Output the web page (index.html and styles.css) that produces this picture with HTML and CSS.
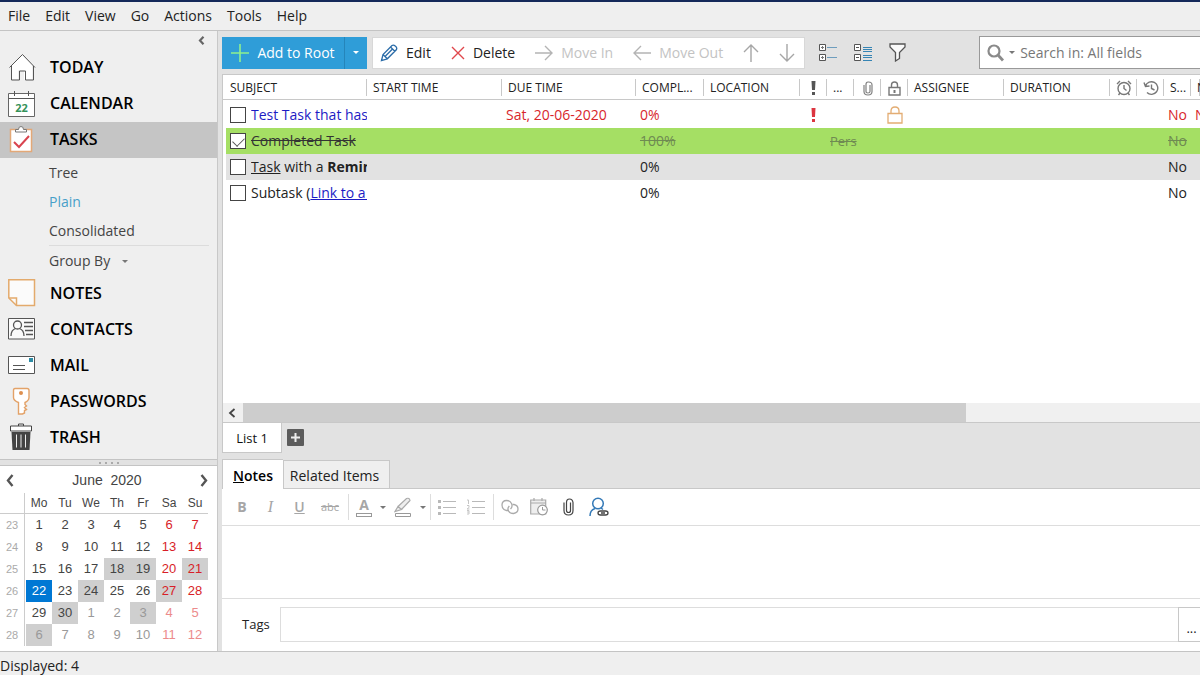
FILE: index.html
```html
<!DOCTYPE html>
<html lang="en">
<head>
<meta charset="utf-8">
<title>Tasks</title>
<link rel="stylesheet" href="styles.css">
</head>
<body>
<div class="app">
  <nav class="menubar" aria-label="Main menu">
    <button>File</button><button>Edit</button><button>View</button><button>Go</button><button>Actions</button><button>Tools</button><button>Help</button>
  </nav>
  <div class="workspace">
    <aside class="sidebar">
      <div class="sections">
        <button class="collapse" aria-label="Collapse panel"><svg width="7" height="9" viewBox="0 0 7 9"><path d="M5.500 .8 2 4.500l3.500 3.700" fill="none" stroke="#666" stroke-width="2.200"/></svg></button>
        <a class="section" href="#today"><svg width="28" height="28" viewBox="0 0 28 28"><path d="M4 12v14.500h6v-9h6v9h8V12L14 2z" fill="#fff"/><path d="M1.500 14.500 14.500 1.500l12.500 13M3.500 13v14h8v-9h6v9h8V13" fill="none" stroke="#555"/></svg><span>TODAY</span></a>
        <a class="section" href="#calendar"><svg width="28" height="28" viewBox="0 0 28 28"><path d="M.5 4.500h26v23H.5z" fill="#fff" stroke="#666"/><path d="M.5 9.500h26M6.500 2v5M20.500 2v5" stroke="#555"/><text x="13.500" y="23" class="day">22</text></svg><span>CALENDAR</span></a>
        <a class="section current" href="#tasks"><svg width="28" height="28" viewBox="0 0 28 28"><path d="M2.500 4.500h21v22h-21z" fill="#fff" stroke="#e3a877" stroke-width="1.500"/><path d="M7.500 7V4.500h3Q10.500 1.500 13 1.500t2.500 3h3V7z" fill="#fff" stroke="#777"/><path d="m6 17 5 5 10-11" fill="none" stroke="#d9444f" stroke-width="2"/></svg><span>TASKS</span></a>
        <div class="views">
          <a href="#tree">Tree</a><a class="active" href="#plain">Plain</a><a href="#consolidated">Consolidated</a>
          <button class="group">Group By <i class="caret"></i></button>
        </div>
        <a class="section" href="#notes"><svg width="28" height="28" viewBox="0 0 28 28"><path d="M.8.8h25.700v25.700H8.500L.8 19z" fill="#fbfbfb" stroke="#e3aa6c" stroke-width="1.500"/><path d="M1 19h7.500v7.500" fill="none" stroke="#e3aa6c" stroke-width="1.500"/></svg><span>NOTES</span></a>
        <a class="section" href="#contacts"><svg width="28" height="28" viewBox="0 0 28 28"><path d="M.5 3.500h26v20.500H.5z" fill="#fafafa" stroke="#555"/><g fill="none" stroke="#555" stroke-width="1.300"><circle cx="9.500" cy="10" r="4"/><path d="M3 21q0-6 4.500-7.500M16 21q0-6-4.500-7.500M16 7.500h9M16 11.500h9M17 15.500h8M18 19.500h7"/></g></svg><span>CONTACTS</span></a>
        <a class="section" href="#mail"><svg width="28" height="28" viewBox="0 0 28 28"><path d="M.5 5.500h26v17H.5z" fill="#fff" stroke="#555"/><path d="M21 7h4v4h-4z" fill="#2d8ca5"/><path d="M5 14.500h12M5 18.500h12" stroke="#555"/></svg><span>MAIL</span></a>
        <a class="section" href="#passwords"><svg width="28" height="28" viewBox="0 0 28 28"><path d="M7 1.500h12q2 0 2 2v7q0 3-4 5v2l1.500 1.500-2 1.500 2 2-2 1v2.500l-2 1h-4V15.500q-5-2-5-5v-7q0-2 1.500-2z" fill="#fff" stroke="#e3a268" stroke-width="1.400"/><circle cx="13" cy="6" r="2" fill="#dd8f50"/></svg><span>PASSWORDS</span></a>
        <a class="section" href="#trash"><svg width="28" height="28" viewBox="0 0 28 28"><path d="M2.500 3h21v5h-21z" fill="#fff" stroke="#444"/><path d="M10.500 3V1h5v2" fill="none" stroke="#444"/><path d="M3.500 9h19l-1 18h-17z" fill="#444"/><path d="M8.500 11.500v13M13 11.500v13M17.500 11.500v13" stroke="#eee"/></svg><span>TRASH</span></a>
      </div>
      <div class="splitter"><i></i><i></i><i></i><i></i></div>
      <div class="calendar">
        <div class="month">
          <button aria-label="Previous month"><svg width="8" height="13" viewBox="0 0 8 13"><path d="M6.500 1 2 6.500 6.500 12" fill="none" stroke="#555" stroke-width="2.400"/></svg></button>
          <span>June&nbsp; 2020</span>
          <button aria-label="Next month"><svg width="8" height="13" viewBox="0 0 8 13"><path d="M1.500 1 6 6.500 1.500 12" fill="none" stroke="#555" stroke-width="2.400"/></svg></button>
        </div>
        <table class="days">
          <thead><tr><th></th><th>Mo</th><th>Tu</th><th>We</th><th>Th</th><th>Fr</th><th>Sa</th><th>Su</th></tr></thead>
          <tbody>
            <tr><th>23</th><td>1</td><td>2</td><td>3</td><td>4</td><td>5</td><td>6</td><td>7</td></tr>
            <tr><th>24</th><td>8</td><td>9</td><td>10</td><td>11</td><td>12</td><td>13</td><td>14</td></tr>
            <tr><th>25</th><td>15</td><td>16</td><td>17</td><td class="busy">18</td><td class="busy">19</td><td>20</td><td class="busy">21</td></tr>
            <tr><th>26</th><td class="today">22</td><td>23</td><td class="busy">24</td><td>25</td><td>26</td><td class="busy">27</td><td>28</td></tr>
            <tr><th>27</th><td>29</td><td class="busy">30</td><td class="other">1</td><td class="other">2</td><td class="other busy">3</td><td class="other">4</td><td class="other">5</td></tr>
            <tr><th>28</th><td class="other busy">6</td><td class="other">7</td><td class="other">8</td><td class="other">9</td><td class="other">10</td><td class="other">11</td><td class="other">12</td></tr>
          </tbody>
        </table>
      </div>
    </aside>

    <main class="content">
      <div class="toolbar">
        <div class="add">
          <button class="add-main"><svg width="18" height="18" viewBox="0 0 18 18"><path d="M9 0v18M0 9h18" stroke="#8ff08f" stroke-width="1.600"/></svg>Add to Root</button>
          <button class="add-more" aria-label="More add options"><i class="caret"></i></button>
        </div>
        <div class="actions">
          <button><svg width="18" height="18" viewBox="0 0 18 18"><path d="m1.500 16.500 1.500-6L12 1.500q1.500-1 3.500.7t.8 3.600l-9 9zM3 10.500l4.300 4.300M10.500 3l4.300 4.300M5.500 12l7-7" fill="none" stroke="#2b6ca8" stroke-width="1.300"/></svg>Edit</button>
          <button><svg width="14" height="14" viewBox="0 0 14 14"><path d="m1 1 12 12M13 1 1 13" stroke="#e0474c" stroke-width="1.400"/></svg>Delete</button>
          <button disabled><svg width="18" height="18" viewBox="0 0 18 18"><path d="M0 9h17M10 2l7 7-7 7" fill="none" stroke="#b4b4b4" stroke-width="1.400"/></svg>Move In</button>
          <button disabled><svg width="18" height="18" viewBox="0 0 18 18"><path d="M18 9H1M8 2 1 9l7 7" fill="none" stroke="#b4b4b4" stroke-width="1.400"/></svg>Move Out</button>
          <button disabled aria-label="Move up"><svg width="16" height="18" viewBox="0 0 16 18"><path d="M8 18V1M1 8l7-7 7 7" fill="none" stroke="#a6a6a6" stroke-width="1.400"/></svg></button>
          <button disabled aria-label="Move down"><svg width="16" height="18" viewBox="0 0 16 18"><path d="M8 0v17M1 10l7 7 7-7" fill="none" stroke="#a6a6a6" stroke-width="1.400"/></svg></button>
        </div>
        <div class="tools">
          <button aria-label="Expand all"><svg width="19" height="18" viewBox="0 0 19 18"><path d="M.5.5h6v6h-6zM.5 10.500h6v6h-6z" fill="#fff" stroke="#555"/><path d="M2 3.500h3M3.500 2v3M2 13.500h3M3.500 12v3" stroke="#777"/><path d="M8 3.500h10M8 13.500h10" stroke="#6e9dbd"/></svg></button>
          <button aria-label="Collapse all"><svg width="19" height="18" viewBox="0 0 19 18"><path d="M.5.5h6v6h-6zM.5 10.500h6v6h-6z" fill="#fff" stroke="#555"/><path d="M2 3.500h3M2 13.500h3" stroke="#555"/><path d="M9 3.500h9M9 5.500h9M9 7.500h9M9 11.500h9M9 13.500h9M9 16.500h9" stroke="#3584b4"/></svg></button>
          <button aria-label="Filter"><svg width="17" height="19" viewBox="0 0 17 19"><path d="M1 1h15v3l-5.500 5.500v6L6.500 18V9.500L1 4z" fill="#fafafa" stroke="#555" stroke-width="1.300"/></svg></button>
        </div>
        <label class="search">
          <svg width="17" height="18" viewBox="0 0 17 18"><circle cx="7" cy="7" r="5.500" fill="none" stroke="#8a8a8a" stroke-width="2.200"/><path d="m11 11 5 5.500" stroke="#8a8a8a" stroke-width="2.800"/></svg>
          <i class="caret"></i>
          <input type="search" aria-label="Search" placeholder="Search in: All fields">
        </label>
      </div>

      <div class="grid">
        <table class="tasks">
          <colgroup><col class="c-subject"><col class="c-date"><col class="c-due"><col class="c-complete"><col class="c-text"><col class="c-icon"><col class="c-icon"><col class="c-icon"><col class="c-icon"><col class="c-text"><col class="c-duration"><col class="c-icon"><col class="c-icon"><col class="c-icon"><col></colgroup>
          <thead><tr>
            <th>SUBJECT</th><th>START TIME</th><th>DUE TIME</th><th>COMPL...</th><th>LOCATION</th>
            <th class="mark"><svg width="5" height="14" viewBox="0 0 5 14"><path d="M.5 0h4L4 9H1zM1 11h3v3H1z" fill="#555"/></svg></th>
            <th>...</th>
            <th class="mark"><svg width="10" height="15" viewBox="0 0 10 15"><path d="M7 4v6.500q0 1.500-2 1.500t-2-1.500V3.500Q3 1 5 1h.5Q9 1 9 4v6.500Q9 14 5 14t-4-3.500V4" fill="none" stroke="#808080" stroke-width="1.200"/></svg></th>
            <th class="mark"><svg width="13" height="15" viewBox="0 0 13 15"><path d="M1 6.500h11V14H1zM3.500 6.500V4q0-3 3-3t3 3v2.500" fill="none" stroke="#777" stroke-width="1.400"/><path d="M5.500 9h2v3h-2z" fill="#777"/></svg></th>
            <th>ASSIGNEE</th><th>DURATION</th>
            <th class="mark"><svg width="16" height="16" viewBox="0 0 16 16"><g fill="none" stroke="#777" stroke-width="1.400"><circle cx="8" cy="8.500" r="6"/><path d="M8 5v3.500l2.500 2M1 4l3-3M15 4l-3-3M4 13l-1.500 2M12 13l1.500 2"/></g></svg></th>
            <th class="mark"><svg width="16" height="16" viewBox="0 0 16 16"><g fill="none" stroke="#777" stroke-width="1.400"><path d="M2.500 6A6.300 6.300 0 1 1 4 12.500M1 2.500 2.500 6.500l4-.5M8.500 4.500v4l3 1.500"/></g></svg></th>
            <th>S...</th><th>N</th>
          </tr></thead>
          <tbody>
            <tr class="overdue"><td><label><input type="checkbox"><span class="blue">Test Task that has</span></label></td><td></td><td>Sat, 20-06-2020</td><td>0%</td><td></td>
              <td class="mark"><svg width="5" height="14" viewBox="0 0 5 14"><path d="M.5 0h4L4 9H1zM1 11h3v3H1z" fill="#dc3540"/></svg></td><td></td><td></td>
              <td class="mark"><svg width="16" height="18" viewBox="0 0 16 18"><path d="M1 7.500h14v9.500H1zM4 7.500V5q0-4 4-4t4 4v2.500" fill="none" stroke="#e3ad73" stroke-width="1.300"/></svg></td>
              <td></td><td></td><td></td><td></td><td>No</td><td>N</td></tr>
            <tr class="done"><td><label><input type="checkbox" checked><span>Completed Task</span></label></td><td></td><td></td><td>100%</td><td></td><td></td><td class="category">Pers</td><td></td><td></td><td></td><td></td><td></td><td></td><td>No</td><td></td></tr>
            <tr class="alt"><td><label><input type="checkbox"><span><u>Task</u> with a <b>Remin</b></span></label></td><td></td><td></td><td>0%</td><td></td><td></td><td></td><td></td><td></td><td></td><td></td><td></td><td></td><td>No</td><td></td></tr>
            <tr><td><div class="cell"><input type="checkbox" aria-label="Subtask"><span>Subtask (<a href="#link">Link to a&nbsp;</a></span></div></td><td></td><td></td><td>0%</td><td></td><td></td><td></td><td></td><td></td><td></td><td></td><td></td><td></td><td>No</td><td></td></tr>
          </tbody>
        </table>
        <div class="scrollbar">
          <button aria-label="Scroll left"><svg width="8" height="10" viewBox="0 0 8 10"><path d="M6.500 1 2 5l4.500 4" fill="none" stroke="#444" stroke-width="1.800"/></svg></button>
          <div class="track"><div class="thumb"></div></div>
        </div>
      </div>

      <div class="lists">
        <button class="list-tab">List 1</button>
        <button class="list-add" aria-label="Add list"><svg width="17" height="17" viewBox="0 0 17 17"><rect width="17" height="17" rx="1" fill="#5c5c5c"/><path d="M8.500 4v9M4 8.500h9" stroke="#eee" stroke-width="2"/></svg></button>
      </div>

      <section class="details">
        <div class="tabs"><button class="selected"><u>N</u>otes</button><button>Related Items</button></div>
        <div class="format">
          <div class="set styles">
            <button class="bold">B</button><button class="italic">I</button><button class="under">U</button><button class="strike">abc</button>
          </div>
          <div class="set colors">
            <button class="fore" aria-label="Text color"><b>A</b><i class="swatch"></i></button>
            <button aria-label="Text color options"><i class="caret"></i></button>
            <button aria-label="Highlight color"><svg width="18" height="20" viewBox="0 0 18 20"><path d="m4 9.500 8.500-8q3-1 3.500 2l-8.500 9zM4 9.500l-3 5 6.500-2z" fill="#eee" stroke="#aaa" stroke-width="1.200"/><path d="M1.500 16.500h15v3h-15z" fill="#fff" stroke="#999"/></svg></button>
            <button aria-label="Highlight options"><i class="caret"></i></button>
          </div>
          <div class="set lines">
            <button aria-label="Bullet list"><svg width="18" height="16" viewBox="0 0 18 16"><path d="M0 1h3v3H0zM0 7h3v3H0zM0 13h3v3H0z" fill="#b9b9b9"/><path d="M5 2.500h13M5 8.500h13M5 14.500h13" stroke="#b9b9b9"/></svg></button>
            <button aria-label="Numbered list"><svg width="18" height="16" viewBox="0 0 18 16"><path d="M0 1h1.500v4M0 6.500h2v2L0 10h2.500M0 11.500h2V15H0M0 13h2" fill="none" stroke="#c6c6c6"/><path d="M5 2.500h13M5 8.500h13M5 14.500h13" stroke="#b9b9b9"/></svg></button>
          </div>
          <div class="set inserts">
            <button aria-label="Insert link"><svg width="18" height="16" viewBox="0 0 18 16"><g fill="none" stroke="#aaa" stroke-width="1.300"><path d="M8 11.500H5.500Q1 10.500 1 6t4.500-4.500q3.500 0 5 3t-1 5.500"/><path d="M11.500 5.500h1.500q4 .8 4 4.500t-4.500 4.500q-3.500 0-5-2.500t.8-5"/></g></svg></button>
            <button aria-label="Insert date"><svg width="18" height="18" viewBox="0 0 18 18"><path d="M.7 2h15v14h-15zM.7 5h15M4 0v3M12 0v3" fill="#eee" stroke="#aaa" stroke-width="1.200"/><circle cx="12.500" cy="12" r="4.800" fill="#fff" stroke="#999" stroke-width="1.200"/><path d="M12.500 9v3h3" fill="none" stroke="#999"/></svg></button>
            <button aria-label="Attach file"><svg width="11" height="18" viewBox="0 0 11 18"><path d="M7.500 4.500v8q0 2-2 2t-2-2v-8Q3.500 1 6.500 1T10 4.500v8Q10 17 5.500 17T1 12.500v-8" fill="none" stroke="#444" stroke-width="1.200"/></svg></button>
            <button aria-label="Link contact"><svg width="20" height="20" viewBox="0 0 20 20"><circle cx="9" cy="6.500" r="5.300" fill="none" stroke="#3379b7" stroke-width="1.500"/><path d="M1 19q0-6 5-7.500M12 11l2 1.500" fill="none" stroke="#3379b7" stroke-width="1.500"/><path d="M11.500 14h5q2.500 0 2.500 2t-2.500 2h-5Q9 18 9 16t2.500-2zM12 16h4" fill="none" stroke="#444" stroke-width="1.300"/></svg></button>
          </div>
        </div>
        <textarea class="editor" aria-label="Notes"></textarea>
        <div class="tags"><label for="tags">Tags</label><input id="tags" type="text"><button aria-label="Choose tags">...</button></div>
      </section>
    </main>
  </div>
  <footer class="status">Displayed: 4</footer>
</div>
</body>
</html>
```

FILE: styles.css
```css
* { box-sizing: border-box; }
body { margin: 0; font: 14px/20px "Open Sans", "Noto Sans", sans-serif; color: #222; background: #e2e2e2; }
button { font: inherit; color: inherit; background: none; border: 0; padding: 0; display: flex; align-items: center; justify-content: center; }
input, textarea { font: inherit; }
a { color: inherit; text-decoration: none; }
svg { display: block; flex: none; }
.caret { display: block; border: 3px solid transparent; border-top-color: #777; border-bottom: 0; }

.app { height: 100vh; display: flex; flex-direction: column; overflow: hidden; }
.menubar { flex: none; height: 31px; display: flex; gap: 15px; padding-left: 8px; background: #efefef; border-top: 2px solid #14295a; border-bottom: 1px solid #c4c4c4; }
.workspace { flex: 1; min-height: 0; display: flex; gap: 4px; }
.status { flex: none; height: 24px; padding-top: 4px; background: #efefef; border-top: 1px solid #c4c4c4; }

/* Sidebar */
.sidebar { flex: none; width: 218px; display: flex; flex-direction: column; border-right: 1px solid #c8c8c8; }
.sections { flex: 1; background: #efefef; border-bottom: 1px solid #c4c4c4; }
.collapse { width: 12px; height: 19px; margin-left: 195px; }
.section { display: flex; align-items: center; gap: 14px; height: 36px; padding: 0 0 2px 8px; font-size: 16px; font-weight: 600; color: #000; }
.section.current { background: #c5c5c5; }
.day { font: bold 11px "Open Sans", sans-serif; fill: #35925a; text-anchor: middle; }
.views { display: flex; flex-direction: column; margin: 0 8px 0 49px; color: #444; }
.views a { line-height: 29px; }
.views .active { color: #489fc9; }
.group { height: 31px; justify-content: flex-start; gap: 12px; border-top: 1px solid #dcdcdc; }
.splitter { height: 5px; display: flex; align-items: center; justify-content: center; gap: 4px; }
.splitter i { width: 2px; height: 2px; background: #aaa; }
.calendar { height: 186px; padding: 1px 9px 0 0; background: #fff; border-top: 1px solid #c4c4c4; font: 13px/22px "Liberation Sans", Arial, sans-serif; color: #444; }
.month { height: 26px; padding: 0 0 0 6px; display: flex; align-items: center; justify-content: space-between; font-size: 14px; }
.days { width: 100%; table-layout: fixed; border-collapse: separate; border-spacing: 0; text-align: center; }
.days th, .days td { padding: 0; font-weight: 400; }
.days th:first-child { width: 26px; padding-right: 2px; font-size: 11px; color: #aaa; background: linear-gradient(#ccc, #ccc) 24px 0 / 1px 100% no-repeat; }
.days thead th { height: 21px; line-height: 20px; font-size: 12px; border-bottom: 1px solid #ccc; }
.days td { height: 22px; }
.days td:nth-child(n+7) { color: #d81e28; }
.days .other { color: #999; }
.days .other:nth-child(n+7) { color: #ec8b8b; }
.days .busy { background: #cfcfcf; }
.days .today { background: #0078d4; color: #fff; }

/* Task toolbar */
.content { flex: 1; min-width: 0; display: flex; flex-direction: column; }
.toolbar { flex: none; height: 43px; display: flex; align-items: center; }
.add { display: flex; height: 32px; background: #2f9dd8; color: #fff; }
.add-main { width: 123px; gap: 8px; border-right: 1px solid #2585ba; }
.add-more { width: 22px; }
.add .caret { border-top-color: #fff; }
.actions { display: flex; gap: 20px; height: 32px; margin-left: 5px; padding: 0 9px 0 7px; background: #fff; border: 1px solid #d8d8d8; }
.actions button { gap: 8px; }
.actions button:disabled { color: #c3c3c3; }
.tools { display: flex; gap: 16px; margin-left: 14px; }
.search { flex: 1; height: 33px; display: flex; align-items: center; gap: 5px; margin-left: 73px; padding-left: 7px; background: #fff; border: 1px solid #999; border-right: 0; }
.search input { flex: 1; min-width: 0; border: 0; padding: 0; outline: 0; background: none; }
.search input::placeholder { color: #777; }

/* Task list */
.grid { flex: 1; min-height: 0; display: flex; flex-direction: column; justify-content: space-between; background: #fff; border: 1px solid #c8c8c8; border-width: 1px 0 1px 1px; overflow: hidden; }
.tasks { width: 100%; table-layout: fixed; border-collapse: separate; border-spacing: 0; text-align: left; }
.c-subject { width: 144px; }
.c-date { width: 135px; }
.c-due { width: 134px; }
.c-complete { width: 68px; }
.c-text { width: 96px; }
.c-icon { width: 27px; }
.c-duration { width: 106px; }
.tasks th { height: 25px; padding: 2px 0 0 6px; font-size: 12px; font-weight: 400; border-bottom: 1px solid #c8c8c8; white-space: nowrap; overflow: hidden; background: linear-gradient(#c8c8c8, #c8c8c8) 100% 4px / 1px 17px no-repeat; }
.tasks th:first-child { padding-left: 7px; }
.tasks td { height: 26px; padding: 0 0 0 4px; white-space: nowrap; overflow: hidden; background-clip: padding-box; }
.tasks td:first-child { border-left: 3px solid transparent; }
.tasks .category { overflow: visible; padding-left: 3px; font-size: 13px; }
.tasks td.mark { padding: 0; }
.tasks th.mark { padding: 2px 0 0; }
.tasks .mark svg { margin: auto; }
.tasks tbody tr:first-child td { height: 28px; padding-top: 2px; }
.tasks label, .cell { display: flex; align-items: center; gap: 5px; }
.tasks label span, .cell span { overflow: hidden; }
.tasks a { color: #1c1cc4; text-decoration: underline; }
.tasks input { appearance: none; flex: none; width: 16px; height: 16px; margin: 0; background: #fff; border: 1px solid #444; }
.tasks input:checked::before { content: ""; display: block; width: 10px; height: 6px; margin: 3px 2px; border: solid #555; border-width: 0 0 1px 1px; transform: rotate(-45deg); }
.overdue { color: #d8262c; }
.blue { color: #1c1cc4; }
.done td { background-color: #a5df64; color: #6f8a52; text-decoration: line-through; }
.done label { color: #333; text-decoration: line-through; }
.alt td { background-color: #e2e2e2; }
.scrollbar { display: flex; height: 19px; background: #f0f0f0; }
.scrollbar button { width: 20px; padding-right: 2px; }
.track { flex: 1; }
.thumb { width: 75.600%; height: 100%; background: #cdcdcd; }

.lists { flex: none; display: flex; height: 36px; gap: 5px; }
.list-tab { width: 60px; height: 30px; background: #fff; border: 1px solid #c8c8c8; border-top: 0; font-size: 13px; font-weight: 500; color: #111; }
.list-add { height: 28px; }

/* Details */
.details { flex: none; background: #fff; }
.tabs { display: flex; align-items: flex-end; height: 30px; background: linear-gradient(#e2e2e2 29px, #c8c8c8 29px); }
.tabs button { width: 107px; height: 29px; padding: 2px 4px 0 0; background: #efefef; border: 1px solid #c8c8c8; }
.tabs .selected { width: 61px; height: 30px; padding-right: 0; background: #fff; border-bottom: 0; border-right: 0; color: #000; font-weight: 600; }
.format { display: flex; align-items: center; height: 37px; border-bottom: 1px solid #ddd; color: #a6a6a6; padding-left: 12px; }
.set { display: flex; align-items: center; height: 26px; border-right: 1px solid #ddd; }
.set:last-child { border: 0; }
.styles { padding-right: 2px; font-weight: 600; }
.styles button { width: 29px; }
.styles .bold { width: 16px; font-weight: 700; margin-right: 6px; }
.italic { font: italic 16px "Liberation Serif", serif; }
.under { text-decoration: underline; }
.styles .strike { width: 32px; font-size: 11px; font-weight: 400; text-decoration: line-through; }
.colors { gap: 8px; padding: 0 4px 0 7px; }
.fore { flex-direction: column; width: 16px; line-height: 16px; }
.swatch { width: 16px; height: 4px; border: 1px solid #999; }
.lines { gap: 11px; padding: 0 8px 0 7px; }
.inserts { gap: 11px; padding-left: 7px; }
.inserts button:nth-child(3) { margin: 0 4px; }
.editor { display: block; width: 100%; height: 73px; border: 0; border-bottom: 1px solid #ddd; resize: none; outline: 0; }
.tags { display: flex; align-items: center; height: 52px; padding: 0 0 2px 20px; font-size: 13px; }
.tags input { flex: 1; min-width: 0; height: 35px; margin-left: 10px; border: 1px solid #ddd; border-right: 0; }
.tags button { width: 22px; height: 35px; padding: 8px 0 0 4px; border: 1px solid #c8c8c8; border-right: 0; }
```
